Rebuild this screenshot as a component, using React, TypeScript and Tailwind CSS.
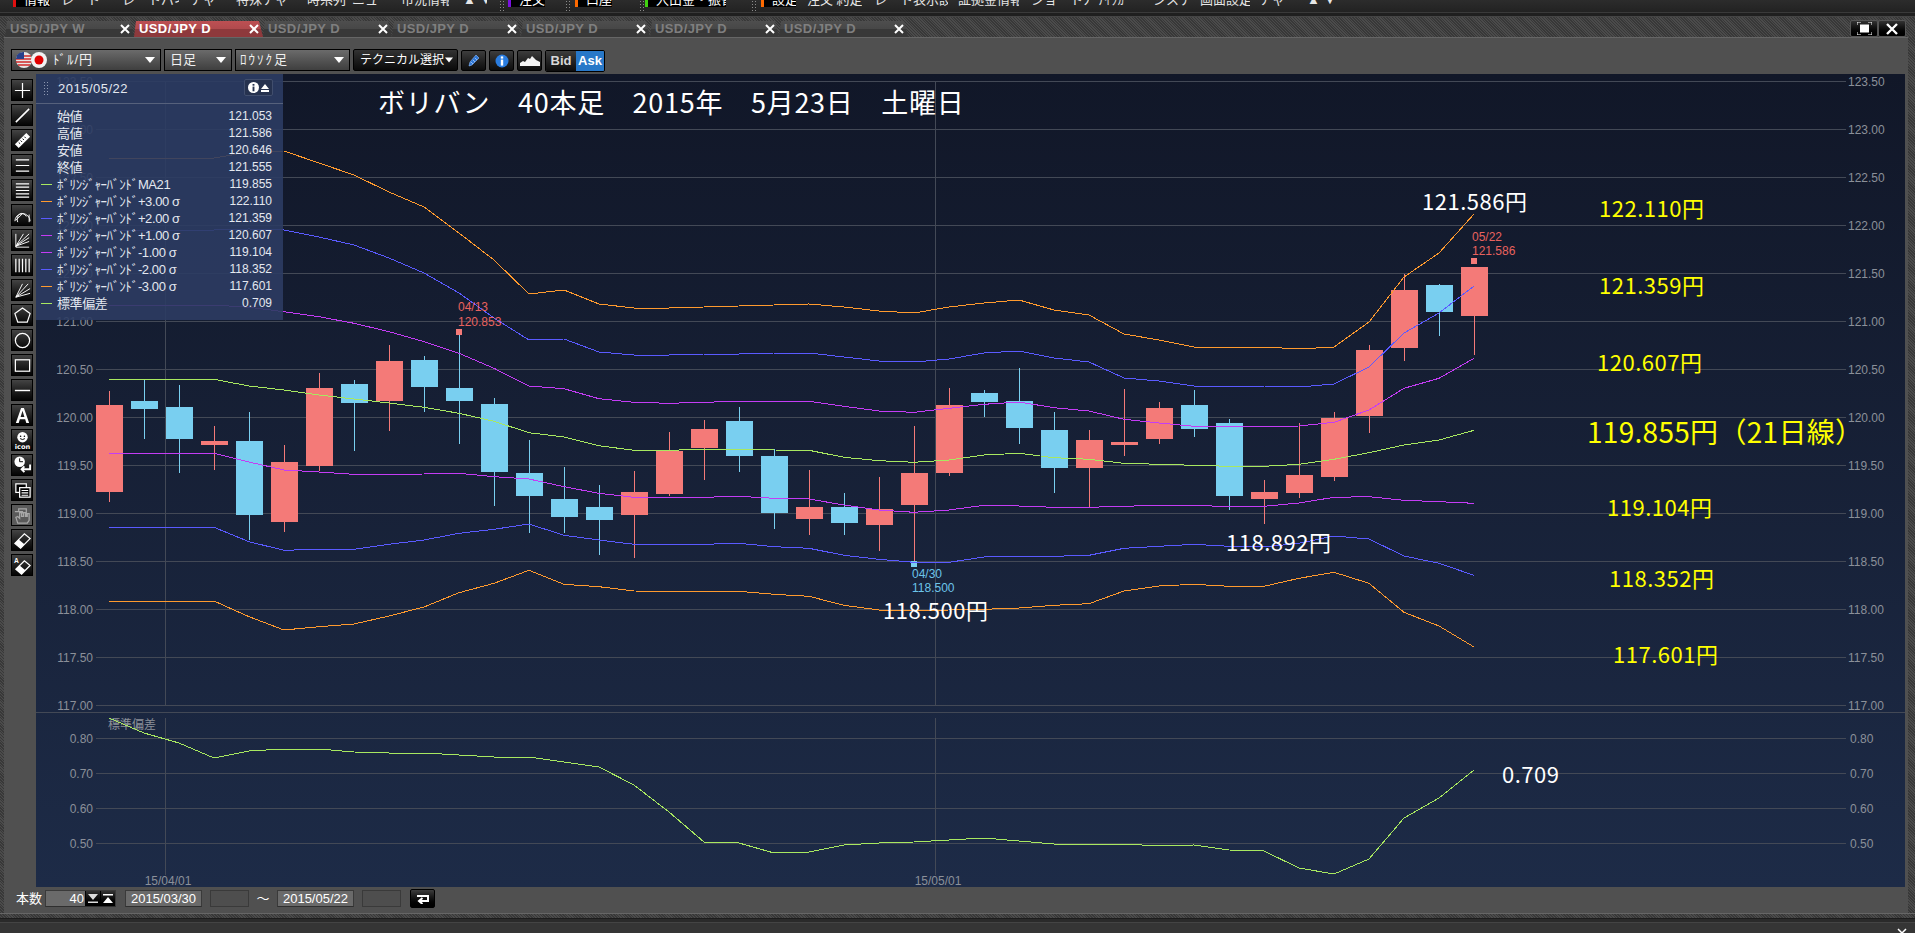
import type { ReactNode } from 'react';

const GRID = '#434956';
const AXIS = '#8b9099';
const RED = '#f47a78';
const BLUE = '#79cff0';
const FONT = "'Liberation Sans', 'Noto Sans CJK JP', sans-serif";

// wick top, body top, body bottom, wick bottom (offset from y=300, 3x), colour
const candles: [number, number, number, number, 'r' | 'b'][] = [
    [273, 315, 575, 605, 'r'], [238, 303, 327, 417, 'b'], [255, 321, 417, 518, 'b'], [378, 423, 435, 510, 'r'],
    [336, 423, 645, 720, 'b'], [435, 486, 666, 696, 'r'], [219, 264, 498, 513, 'r'], [240, 252, 309, 453, 'b'],
    [135, 183, 303, 393, 'r'], [168, 180, 261, 336, 'b'], [90, 264, 303, 432, 'b'], [294, 312, 516, 618, 'b'],
    [420, 519, 588, 699, 'b'], [501, 597, 651, 699, 'b'], [555, 621, 660, 765, 'b'], [513, 576, 645, 774, 'r'],
    [396, 453, 582, 588, 'r'], [360, 387, 444, 540, 'r'], [321, 363, 468, 516, 'b'], [447, 468, 639, 687, 'b'],
    [510, 621, 657, 705, 'r'], [579, 621, 669, 705, 'b'], [531, 627, 675, 753, 'r'], [378, 519, 615, 785, 'r'],
    [264, 315, 519, 528, 'r'], [270, 279, 306, 351, 'b'], [204, 303, 384, 432, 'b'], [336, 390, 504, 579, 'b'],
    [390, 420, 504, 622, 'r'], [267, 426, 435, 468, 'r'], [306, 324, 417, 432, 'r'], [270, 315, 387, 411, 'b'],
    [357, 369, 588, 630, 'b'], [540, 576, 597, 672, 'r'], [369, 525, 579, 594, 'r'], [336, 354, 531, 543, 'r'],
    [135, 150, 348, 399, 'r'], [-78, -30, 144, 183, 'r'], [-48, -45, 36, 108, 'b'], [-99, -99, 48, 165, 'r'],
];

const fromZ = (zs: number[]) => zs.map((z) => 300 + z / 3);

const ma = fromZ([238, 238, 238, 238, 258, 270, 285, 297, 309, 322, 340, 364, 398, 411, 437, 451, 451, 448, 448, 450, 451, 472, 482, 487, 480, 465, 460, 473, 478, 490, 493, 496, 499, 499, 493, 478, 458, 435, 420, 391]);
const plus1 = fromZ([15, 15, 15, 15, 22, 35, 50, 70, 95, 125, 160, 205, 258, 266, 296, 307, 310, 307, 304, 304, 304, 319, 333, 337, 325, 313, 306, 323, 333, 358, 369, 379, 380, 380, 378, 367, 330, 265, 235, 175]);
const minus1 = fromZ([460, 460, 460, 460, 486, 510, 516, 523, 523, 522, 520, 530, 537, 560, 580, 592, 592, 592, 589, 595, 597, 615, 630, 637, 630, 616, 618, 622, 622, 619, 616, 616, 620, 619, 609, 592, 590, 601, 605, 610]);
const minus2 = fromZ([682, 682, 682, 682, 725, 751, 748, 748, 733, 720, 700, 688, 672, 706, 720, 733, 733, 733, 730, 740, 745, 766, 778, 787, 787, 771, 769, 769, 766, 745, 739, 733, 739, 741, 730, 708, 717, 768, 790, 826]);
const minus3 = fromZ([903, 903, 903, 903, 950, 990, 980, 972, 948, 921, 878, 850, 811, 853, 860, 873, 874, 874, 874, 883, 889, 916, 930, 933, 930, 928, 924, 916, 911, 873, 858, 853, 859, 859, 835, 817, 850, 937, 978, 1041]);
const plus2 = [230, 230, 230, 230, 229, 230, 237, 245, 258, 273, 293, 318, 340, 339, 352, 355, 355, 354, 354, 353, 353, 357, 361, 362, 359, 353, 351, 358, 362, 378, 381, 386, 386, 386, 387, 384, 367, 333, 313, 286];
const plus3 = [158, 158, 158, 158, 152, 151, 163, 175, 192, 207, 233, 260, 294, 290, 304, 308, 308, 307, 306, 305, 304, 307, 311, 313, 307, 303, 300, 310, 315, 334, 340, 347, 347, 347, 349, 347, 322, 277, 253, 214];
const stdDev = [718, 733, 743, 758, 751, 749, 749, 752, 753, 753, 755, 757, 757, 762, 767, 785, 812, 842, 843, 853, 852, 845, 843, 842, 840, 838, 841, 844, 844, 844, 846, 845, 850, 851, 868, 874, 859, 818, 798, 770];

const cx = (i: number) => Math.round(109.4 + 35 * i);
const points = (ys: number[]) => ys.map((y, i) => `${cx(i)},${y.toFixed(1)}`).join(' ');

const priceTicks = ['123.50', '123.00', '122.50', '122.00', '121.50', '121.00', '120.50', '120.00', '119.50', '119.00', '118.50', '118.00', '117.50', '117.00'];
const subTicks = ['0.80', '0.70', '0.60', '0.50'];

const menuText = 'text-[13px] leading-[13px] text-[#e6e6e6] -mt-[7px] whitespace-nowrap overflow-hidden';
const Tag = ({ color, w, ml, children }: { color: string; w: string; ml: string; children: ReactNode }) => (
    <div className={`${w} ${ml} h-[7px] bg-black flex overflow-hidden`}>
        <div className={`${color} w-[3px] h-full shrink-0`} />
        <span className="pl-[8px] text-[13px] leading-[13px] -mt-[7px] text-white whitespace-nowrap">{children}</span>
    </div>
);

const Grip = ({ ml }: { ml: string }) => (
    <div className={`${ml} w-[6px] h-[11px] shrink-0 bg-[radial-gradient(#8a8a8a_1px,transparent_1px)] bg-[length:3px_3px]`} />
);

const TopMenu = () => (
    <div className="h-[13px] flex items-start bg-gradient-to-b from-[#2c2c2c] to-[#222222] border-b border-[#3a3a3a] overflow-hidden">
        <Tag color="bg-[#e01010]" w="w-[37px]" ml="ml-[13px]">情報</Tag>
        <span className={`${menuText} ml-[11px] w-[50px]`}>レート一覧</span>
        <span className={`${menuText} ml-[11px] w-[57px]`}>レートパネル</span>
        <span className={`${menuText} ml-[11px] w-[35px]`}>チャート</span>
        <span className={`${menuText} ml-[11px] w-[53px]`}>特殊チャート</span>
        <span className={`${menuText} ml-[18px] w-[40px]`}>時系列</span>
        <span className={`${menuText} ml-[5px] w-[38px]`}>ニュース</span>
        <span className={`${menuText} ml-[11px] w-[48px]`}>市況情報</span>
        <span className={`${menuText} ml-[14px] w-[24px] text-[10px]`}>▲ ▼</span>
        <Grip ml="ml-[12px]" />
        <Tag color="bg-[#7a10e0]" w="w-[37px]" ml="ml-[3px]">注文</Tag>
        <Grip ml="ml-[20px]" />
        <Tag color="bg-[#ff6a00]" w="w-[37px]" ml="ml-[4px]">口座</Tag>
        <Grip ml="ml-[27px]" />
        <Tag color="bg-[#40d010]" w="w-[81px]" ml="ml-[0px]">入出金・振替</Tag>
        <Grip ml="ml-[25px]" />
        <Tag color="bg-[#ff6a00]" w="w-[35px]" ml="ml-[4px]">設定</Tag>
        <span className={`${menuText} ml-[11px] w-[55px]`}>注文 約定</span>
        <span className={`${menuText} ml-[12px] w-[74px]`}>レート表示設定</span>
        <span className={`${menuText} ml-[10px] w-[61px]`}>証拠金情報</span>
        <span className={`${menuText} ml-[12px] w-[58px]`}>ショートカット</span>
        <span className={`${menuText} ml-[9px] w-[34px]`}>ﾅｲﾌｶﾞ</span>
        <span className={`${menuText} ml-[21px] w-[36px]`}>システム</span>
        <span className={`${menuText} ml-[11px] w-[50px]`}>画面設定</span>
        <span className={`${menuText} ml-[9px] w-[36px]`}>チャート</span>
        <span className={`${menuText} ml-[12px] w-[30px] text-[10px]`}>▲ ▼</span>
    </div>
);

const hatch = 'bg-[repeating-linear-gradient(45deg,#383838_0,#383838_1px,#4b4b4b_1px,#4b4b4b_2px)]';

const Tab = ({ label, active }: { label: string; active?: boolean }) => (
    <div className={`w-[129px] h-[16px] shrink-0 flex items-center justify-between pl-[5px] pr-[3px] [clip-path:polygon(2px_0,calc(100%-4px)_0,100%_100%,0_100%)] ${active ? 'bg-[linear-gradient(#bd5053_0,#b04a4d_50%,#8e393c_50%,#8e393c_100%)] text-white' : 'bg-[linear-gradient(#4e4e4e_0,#474747_50%,#383838_50%,#383838_100%)] text-[#7f7f7f]'}`}>
        <span className="text-[13px] leading-[16px] font-bold tracking-[0.4px]">{label}</span>
        <span className="w-[12px] h-[12px] flex items-center justify-center">
            <svg width="10" height="10" viewBox="0 0 10 10"><path d="M1 1 9 9M9 1 1 9" stroke="#fff" strokeWidth="2" /></svg>
        </span>
    </div>
);

const Caret = ({ className }: { className?: string }) => (
    <svg className={className} width="10" height="6" viewBox="0 0 10 6"><path d="M0 0h10L5 6z" fill="#fff" /></svg>
);

const selectBox = 'h-[22px] flex items-center justify-between bg-gradient-to-b from-[#6b6b6b] to-[#3f3f3f] border border-black text-[13px] text-[#f0f0f0] pr-[5px]';
const squareBtn = 'w-[25px] h-[21px] mt-[1px] rounded-[2px] flex items-center justify-center bg-gradient-to-b from-[#3d3d3d] to-[#0d0d0d] border border-black';

const Toolbar = () => (
    <div className="h-[37px] flex items-center gap-[3px] pl-[7px] pt-[8px] bg-[#505050] border-t border-[#666666]">
        <div className={`${selectBox} w-[150px]`}>
            <div className="flex items-center">
                <svg width="34" height="18" viewBox="0 0 34 18" className="ml-[3px]">
                    <circle cx="9" cy="9" r="8" fill="#e8e8e8" />
                    <path d="M2 5h14M1 8h16M1 11h16M3 14h12" stroke="#d02828" strokeWidth="1.4" />
                    <path d="M2 4a8 8 0 0 1 7-3v7H1z" fill="#27408b" />
                    <circle cx="24" cy="9" r="8" fill="#f2f2f2" />
                    <circle cx="24" cy="9" r="4.5" fill="#e00000" />
                </svg>
                <span className="ml-[4px] tracking-[1px]">ﾄﾞﾙ/円</span>
            </div>
            <Caret />
        </div>
        <div className={`${selectBox} w-[68px] pl-[5px]`}><span>日足</span><Caret /></div>
        <div className={`${selectBox} w-[115px] pl-[4px]`}><span className="tracking-[2px]">ﾛｳｿｸ足</span><Caret /></div>
        <div className="w-[105px] h-[22px] rounded-[2px] flex items-center justify-between pl-[6px] pr-[4px] bg-gradient-to-b from-[#333333] to-[#0a0a0a] border border-black text-[12px] whitespace-nowrap text-white">
            <span>テクニカル選択</span><Caret className="w-[8px]" />
        </div>
        <div className={squareBtn}>
            <svg width="14" height="14" viewBox="0 0 14 14"><path d="M2 12 3 8 9 1l3 3-7 7z" fill="#2f78d8" stroke="#8fc0ff" strokeWidth="0.6" /><path d="M4 8l2 2M6 6l2 2M8 4l2 2" stroke="#bcd8ff" strokeWidth="0.7" /></svg>
        </div>
        <div className={squareBtn}>
            <svg width="14" height="14" viewBox="0 0 14 14"><circle cx="7" cy="7" r="6.5" fill="#2a7de0" /><rect x="5.8" y="2.4" width="2.4" height="2.2" fill="#fff" /><rect x="5.8" y="5.6" width="2.4" height="6" fill="#fff" /></svg>
        </div>
        <div className={squareBtn}>
            <svg width="20" height="12" viewBox="0 0 20 12"><path d="M0 11V8l3-2 2 1 3-4 2 1 2-3 2 2 2 2 2 1 2 1v4z" fill="#f4f4f4" /></svg>
        </div>
        <div className="flex h-[22px] mt-[1px] rounded-[2px] overflow-hidden border border-black">
            <span className="w-[30px] flex items-center justify-center bg-gradient-to-b from-[#3d3d3d] to-[#0d0d0d] text-[13px] font-bold text-[#d8d8d8]">Bid</span>
            <span className="w-[28px] flex items-center justify-center bg-[#2878c8] text-[13px] font-bold text-white">Ask</span>
        </div>
    </div>
);

const ic = { fill: 'none', stroke: '#fff', strokeWidth: 1.3 };
const railIcons: ReactNode[] = [
    <path {...ic} d="M10 2v16M2 10h16" />,
    <path {...ic} strokeWidth={1.6} d="M3 17 17 3" />,
    <g><path d="M2 14 14 2l4 4L6 18z" fill="#fff" /><path d="M6 12l1.5 1.5M8 10l1.5 1.5M10 8l1.5 1.5M12 6l1.5 1.5" stroke="#000" strokeWidth="1" /></g>,
    <path {...ic} d="M3 4h14M3 10h14M3 16h14" />,
    <path {...ic} d="M3 3h14M3 6.500h14M3 10h14M3 13.500h14M3 17h14" />,
    <path {...ic} strokeWidth={1} d="M2 16a8 8 0 0 1 16 0M5 17a5 6 0 0 1 9-6M3 15l7-7M17 9v8" />,
    <path {...ic} strokeWidth={1} d="M3 16 17 3M3 16 17 7M3 16 17 11M3 16 11 3M3 17h14M3 3v14" />,
    <path {...ic} d="M3 3v14M6.500 3v14M10 3v14M13.500 3v14M17 3v14" />,
    <path {...ic} strokeWidth={1} d="M3 17 16 3M3 17 18 8M3 17 10 3M3 17 18 13" />,
    <path {...ic} d="M10 2l8 6-3 9H5L2 8z" />,
    <circle {...ic} cx="10" cy="10" r="7.500" />,
    <rect {...ic} x="2.500" y="4" width="15" height="12" />,
    <path {...ic} strokeWidth={1.5} d="M2 10h16" />,
    <path fill="#fff" d="M8.500 2h3L17 18h-3l-1.200-4H7.200L6 18H3zM8 11.500h4L10 5z" />,
    <g><circle cx="10" cy="6.500" r="5.500" fill="#fff" /><circle cx="8" cy="5.500" r="0.800" /><circle cx="12" cy="5.500" r="0.800" /><path d="M7.500 8q2.500 2 5 0" stroke="#000" fill="none" /><text x="10" y="18.500" textAnchor="middle" fontSize="7" fontWeight="700" fill="#fff" fontFamily="'DejaVu Sans', sans-serif">icon</text></g>,
    <g><circle cx="7" cy="6" r="5.500" fill="#fff" /><path d="M7 2.500V6h3.500" stroke="#000" fill="none" /><path d="M18 9v5H9m3-3-3 3 3 3" stroke="#fff" strokeWidth="2" fill="none" /></g>,
    <g fill="#000" stroke="#fff" strokeWidth="1.3"><rect x="3" y="3" width="11" height="9" /><rect x="7" y="7" width="11" height="10" /><path d="M9 10h7M9 12.500h7M9 15h7" /></g>,
    <path fill="none" stroke="#a8a8a8" strokeWidth="1.3" d="M2 6h8v2M6 6V3h8v8M5 18l-2-6 2-1 2 2V7h2v4h2V7h2v4h2V8h2v7l-2 3z" />,
    <g><path d="M2 13 12 3l6 5-10 10z" fill="none" stroke="#fff" strokeWidth="1.3" /><path d="M2 13l4-4 6 5-4 4z" fill="#fff" /></g>,
    <g><path d="M3 14 12 5l6 5-9 9z" fill="none" stroke="#fff" strokeWidth="1.3" /><path d="M3 14l4-4 6 5-4 4z" fill="#fff" /><text x="1" y="7" fontSize="7" fontWeight="700" fill="#fff" fontFamily="'Liberation Sans', sans-serif">A</text></g>,
];

const ToolRail = () => (
    <div className="w-[32px] shrink-0 flex flex-col gap-[3px] pl-[7px] pt-[5px]">
        {railIcons.map((icon, i) => (
            <div key={i} className={`w-[22px] h-[22px] flex items-center justify-center border border-black ${i === 17 ? 'bg-[#5a5a5a] border-[#686868]' : 'bg-gradient-to-b from-[#444444] to-[#050505]'}`}>
                <svg width="19" height="19" viewBox="0 0 20 20">{icon}</svg>
            </div>
        ))}
    </div>
);

const infoRows = [
    { label: '始値', value: '121.053' },
    { label: '高値', value: '121.586' },
    { label: '安値', value: '120.646' },
    { label: '終値', value: '121.555' },
    { label: 'ﾎﾞﾘﾝｼﾞｬｰﾊﾞﾝﾄﾞMA21', value: '119.855', color: 'bg-[#a8e860]' },
    { label: 'ﾎﾞﾘﾝｼﾞｬｰﾊﾞﾝﾄﾞ+3.00 σ', value: '122.110', color: 'bg-[#ff9a2e]' },
    { label: 'ﾎﾞﾘﾝｼﾞｬｰﾊﾞﾝﾄﾞ+2.00 σ', value: '121.359', color: 'bg-[#5a5aff]' },
    { label: 'ﾎﾞﾘﾝｼﾞｬｰﾊﾞﾝﾄﾞ+1.00 σ', value: '120.607', color: 'bg-[#c43cf5]' },
    { label: 'ﾎﾞﾘﾝｼﾞｬｰﾊﾞﾝﾄﾞ-1.00 σ', value: '119.104', color: 'bg-[#c43cf5]' },
    { label: 'ﾎﾞﾘﾝｼﾞｬｰﾊﾞﾝﾄﾞ-2.00 σ', value: '118.352', color: 'bg-[#5a5aff]' },
    { label: 'ﾎﾞﾘﾝｼﾞｬｰﾊﾞﾝﾄﾞ-3.00 σ', value: '117.601', color: 'bg-[#ff9a2e]' },
    { label: '標準偏差', value: '0.709', color: 'bg-[#a8e860]' },
];

const InfoPanel = () => (
    <div className="absolute left-0 top-0 w-[247px] h-[246px] bg-[#2c3c63]/90 text-[#e4e8f0]">
        <div className="h-[30px] flex items-center justify-between pl-[7px] pr-[10px] border-b border-[#56617c]">
            <div className="flex items-center gap-[9px]">
                <div className="w-[6px] h-[16px] bg-[radial-gradient(#8d97b0_1px,transparent_1px)] bg-[length:3px_3px]" />
                <span className="text-[13px] tracking-[0.5px]">2015/05/22</span>
            </div>
            <div className="w-[29px] h-[17px] -mt-[2px] rounded-[2px] bg-[#26324f] border border-[#414e6d] flex items-center justify-center gap-[2px]">
                <svg width="11" height="11" viewBox="0 0 14 14"><circle cx="7" cy="7" r="7" fill="#fff" /><rect x="5.800" y="2.500" width="2.400" height="2.200" fill="#26324f" /><rect x="5.800" y="5.800" width="2.400" height="6" fill="#26324f" /></svg>
                <svg width="8" height="8" viewBox="0 0 8 8"><path d="M0 5 4 0l4 5z M0 6h8v2H0z" fill="#fff" /></svg>
            </div>
        </div>
        <div className="pt-[4px]">
            {infoRows.map((row) => (
                <div key={row.label} className="h-[17px] flex items-center pr-[11px]">
                    <div className="w-[21px] shrink-0 pl-[5px]">
                        <div className={`w-[11px] h-[1px] ${row.color ?? ''}`} />
                    </div>
                    <span className="text-[13px] leading-[17px] tracking-[-0.4px] whitespace-nowrap">{row.label}</span>
                    <span className="ml-auto text-[12px] leading-[17px]">{row.value}</span>
                </div>
            ))}
        </div>
    </div>
);

const overlay = "absolute whitespace-nowrap font-['Noto_Sans_CJK_JP',sans-serif] leading-none";
const notes = [
    { text: '121.586円', cls: 'left-[1386px] top-[115px] text-[22px] tracking-[0.5px] text-white' },
    { text: '122.110円', cls: 'left-[1563px] top-[122px] text-[22px] tracking-[0.5px] text-[#ffff00]' },
    { text: '121.359円', cls: 'left-[1563px] top-[199px] text-[22px] tracking-[0.5px] text-[#ffff00]' },
    { text: '120.607円', cls: 'left-[1561px] top-[276px] text-[22px] tracking-[0.5px] text-[#ffff00]' },
    { text: '119.855円（21日線）', cls: 'left-[1551px] top-[343px] text-[28px] tracking-[0.3px] text-[#ffff00]' },
    { text: '119.104円', cls: 'left-[1571px] top-[421px] text-[22px] tracking-[0.5px] text-[#ffff00]' },
    { text: '118.352円', cls: 'left-[1573px] top-[492px] text-[22px] tracking-[0.5px] text-[#ffff00]' },
    { text: '117.601円', cls: 'left-[1577px] top-[568px] text-[22px] tracking-[0.5px] text-[#ffff00]' },
    { text: '118.892円', cls: 'left-[1190px] top-[456px] text-[22px] tracking-[0.5px] text-white' },
    { text: '118.500円', cls: 'left-[847px] top-[524px] text-[22px] tracking-[0.5px] text-white' },
    { text: '0.709', cls: 'left-[1466px] top-[688px] text-[22px] tracking-[0.5px] text-white' },
];

const smallLabels = [
    { x: 458, y: 311, text: '04/13', fill: '#e8625e' },
    { x: 458, y: 326, text: '120.853', fill: '#e8625e' },
    { x: 1472, y: 241, text: '05/22', fill: '#e8625e' },
    { x: 1472, y: 255, text: '121.586', fill: '#e8625e' },
    { x: 912, y: 578, text: '04/30', fill: '#6cc4ea' },
    { x: 912, y: 592, text: '118.500', fill: '#6cc4ea' },
];

const Chart = () => (
    <div className="relative w-[1869px] h-[813px] shrink-0 overflow-hidden bg-gradient-to-b from-[#111728] to-[#1d2b47]">
        <svg width="1869" height="813" viewBox="36 74 1869 813" className="absolute left-0 top-0" fontFamily={FONT}>
            <g shapeRendering="crispEdges" stroke={GRID} strokeWidth="1">
                {priceTicks.map((_, i) => <line key={i} x1="96" x2="1846" y1={81.5 + i * 48} y2={81.5 + i * 48} />)}
                {subTicks.map((_, i) => <line key={i} x1="96" x2="1846" y1={738.5 + i * 35} y2={738.5 + i * 35} />)}
                <line x1="36" x2="1905" y1="712.5" y2="712.5" />
                <line x1="165.5" x2="165.5" y1="81" y2="705" />
                <line x1="165.5" x2="165.5" y1="718" y2="875" />
                <line x1="935.5" x2="935.5" y1="81" y2="705" />
                <line x1="935.5" x2="935.5" y1="718" y2="875" />
            </g>
            <g fontSize="12" fill={AXIS}>
                {priceTicks.map((t, i) => (
                    <g key={t}>
                        <text x="93" y={86 + i * 48} textAnchor="end">{t}</text>
                        <text x="1848" y={86 + i * 48}>{t}</text>
                    </g>
                ))}
                {subTicks.map((t, i) => (
                    <g key={t}>
                        <text x="93" y={743 + i * 35} textAnchor="end">{t}</text>
                        <text x="1850" y={743 + i * 35}>{t}</text>
                    </g>
                ))}
                <text x="168" y="885" textAnchor="middle">15/04/01</text>
                <text x="938" y="885" textAnchor="middle">15/05/01</text>
                <text x="108" y="729">標準偏差</text>
            </g>
            <g shapeRendering="crispEdges">
                {candles.map(([wt, bt, bb, wb, c], i) => (
                    <g key={i} fill={c === 'r' ? RED : BLUE}>
                        <rect x={cx(i)} y={300 + wt / 3} width="1" height={(wb - wt) / 3} />
                        <rect x={cx(i) - 13} y={300 + bt / 3} width="27" height={(bb - bt) / 3} />
                    </g>
                ))}
                <rect x={cx(10) - 3} y="329" width="6" height="6" fill={RED} />
                <rect x={cx(23) - 3} y="561" width="6" height="6" fill={BLUE} />
                <rect x={cx(39) - 3} y="258" width="6" height="6" fill={RED} />
            </g>
            <g fill="none" strokeWidth="1" shapeRendering="crispEdges">
                <polyline points={points(plus3)} stroke="#ff9a2e" />
                <polyline points={points(minus3)} stroke="#ff9a2e" />
                <polyline points={points(plus2)} stroke="#5a5aff" />
                <polyline points={points(minus2)} stroke="#5a5aff" />
                <polyline points={points(plus1)} stroke="#c43cf5" />
                <polyline points={points(minus1)} stroke="#c43cf5" />
                <polyline points={points(ma)} stroke="#a8e860" />
                <polyline points={points(stdDev)} stroke="#a8e860" />
            </g>
            <g fontSize="12">
                {smallLabels.map((l) => <text key={l.x + l.text} x={l.x} y={l.y} fill={l.fill}>{l.text}</text>)}
            </g>
        </svg>
        <InfoPanel />
        <span className={`${overlay} left-[342px] top-[14px] text-[27px] tracking-[0.73px] text-white`}>ボリバン　40本足　2015年　5月23日　土曜日</span>
        {notes.map((n) => <span key={n.text} className={`${overlay} ${n.cls}`}>{n.text}</span>)}
    </div>
);

const fieldBox = 'h-[17px] bg-[#6a6a6a] border border-[#3a3a3a] border-b-[#2f2f2f] text-[13px] leading-[15px] text-white';

const BottomBar = () => (
    <div className="h-[26px] flex items-start pt-[3px] pl-[12px] bg-[#505050] text-white">
        <span className="w-[29px] text-[13px] leading-[17px]">本数</span>
        <div className={`${fieldBox} w-[71px] flex`}>
            <span className="flex-1 text-right pr-[1px]">40</span>
            <span className="w-[15px] bg-gradient-to-b from-[#333333] to-black flex items-center justify-center border-l border-black">
                <svg width="10" height="9" viewBox="0 0 10 9"><path d="M0 0h10L5 6zM0 7.500h10V9H0z" fill="#ddd" /></svg>
            </span>
            <span className="w-[15px] bg-gradient-to-b from-[#333333] to-black flex items-center justify-center border-l border-black">
                <svg width="10" height="9" viewBox="0 0 10 9"><path d="M0 0h10v1.500H0zM0 9l5-6 5 6z" fill="#fff" /></svg>
            </span>
        </div>
        <span className={`${fieldBox} w-[77px] ml-[9px] text-center`}>2015/03/30</span>
        <span className="w-[39px] h-[17px] ml-[8px] bg-[#4e4e4e] border border-[#3a3a3a]" />
        <span className="w-[28px] text-center text-[13px] leading-[17px]">～</span>
        <span className={`${fieldBox} w-[77px] text-center`}>2015/05/22</span>
        <span className="w-[39px] h-[17px] ml-[8px] bg-[#4e4e4e] border border-[#3a3a3a]" />
        <div className="w-[25px] h-[19px] ml-[9px] -mt-[1px] rounded-[2px] bg-gradient-to-b from-[#3d3d3d] to-black border border-black flex items-center justify-center">
            <svg width="14" height="10" viewBox="0 0 14 10"><path d="M1 2h11v5H4m2.500-3L3 7l3.500 3" fill="none" stroke="#fff" strokeWidth="2" /></svg>
        </div>
    </div>
);

const App = () => {
    return (
        <div className={`w-[1915px] h-[933px] overflow-hidden flex flex-col bg-[#3a3a3a] font-['Liberation_Sans','Noto_Sans_CJK_JP',sans-serif]`}>
            <TopMenu />
            <div className="h-[4px] bg-[#1f1f1f] border-b border-[#444444]" />
            <div className={`h-[20px] pt-[4px] pl-[5px] pr-[9px] flex justify-between ${hatch}`}>
                <div className="flex">
                    <Tab label="USD/JPY W" />
                    <Tab label="USD/JPY D" active />
                    <Tab label="USD/JPY D" />
                    <Tab label="USD/JPY D" />
                    <Tab label="USD/JPY D" />
                    <Tab label="USD/JPY D" />
                    <Tab label="USD/JPY D" />
                </div>
                <div className="flex -mt-[1px] h-[17px]">
                    <div className="w-[28px] bg-gradient-to-b from-[#333333] to-black border border-[#555555] rounded-[2px] flex items-center justify-center">
                        <svg width="15" height="13" viewBox="0 0 15 13"><path d="M0 3V0h4M11 0h4v3M15 10v3h-4M4 13H0v-3" fill="none" stroke="#fff" /><rect x="3" y="2.500" width="9" height="8" fill="#fff" /></svg>
                    </div>
                    <div className="w-[28px] bg-gradient-to-b from-[#333333] to-black border border-[#555555] rounded-[2px] flex items-center justify-center">
                        <svg width="12" height="12" viewBox="0 0 12 12"><path d="M1 1 11 11M11 1 1 11" stroke="#fff" strokeWidth="2.400" /></svg>
                    </div>
                </div>
            </div>
            <div className="h-[876px] flex">
                <div className={`w-[4px] shrink-0 ${hatch}`} />
                <div className="w-[1904px] shrink-0 bg-[#505050] flex flex-col">
                    <Toolbar />
                    <div className="flex h-[813px]">
                        <ToolRail />
                        <Chart />
                    </div>
                    <BottomBar />
                </div>
                <div className={`w-[7px] shrink-0 ${hatch}`} />
            </div>
            <div className={`h-[5px] border-t border-[#666666] ${hatch}`} />
            <div className="h-[5px] bg-[#2a2a2a] border-t border-[#1c1c1c] border-b border-b-[#444444]" />
            <div className="h-[10px] bg-[#353535] flex justify-end pr-[8px]">
                <svg width="10" height="10" viewBox="0 0 10 10"><path d="M1 6l4 4 4-4" fill="none" stroke="#fff" strokeWidth="1.500" /></svg>
            </div>
        </div>
    );
};

export default App;
